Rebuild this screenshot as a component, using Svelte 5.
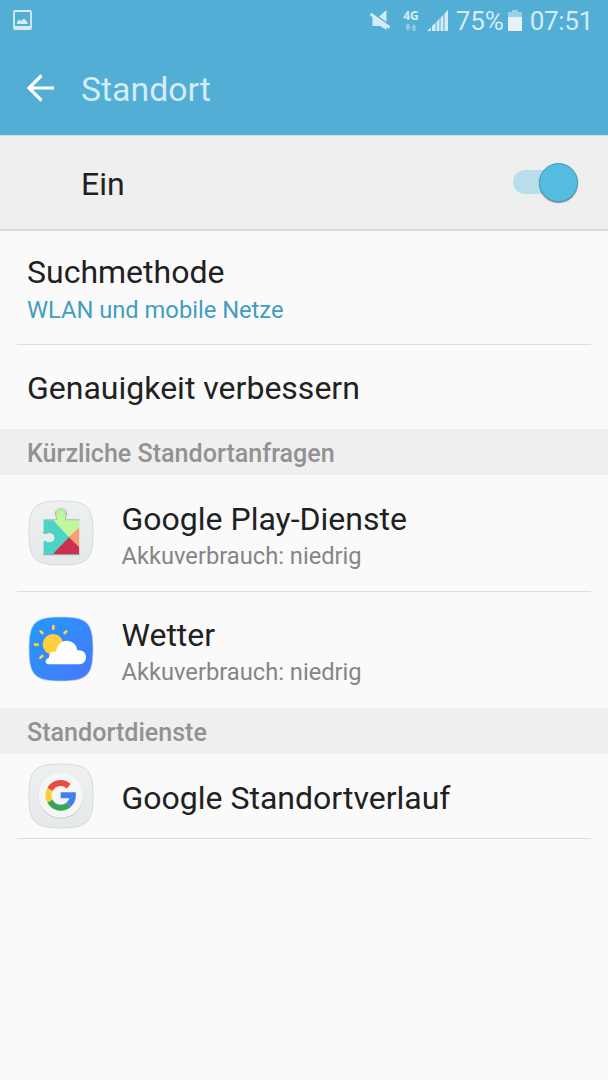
<script lang="ts">
	type App = { name: string; icon: 'play' | 'weather' | 'google'; note?: string };

	const requests: App[] = [
		{ name: 'Google Play-Dienste', icon: 'play', note: 'Akkuverbrauch: niedrig' },
		{ name: 'Wetter', icon: 'weather', note: 'Akkuverbrauch: niedrig' }
	];

	const services: App[] = [{ name: 'Google Standortverlauf', icon: 'google' }];

	// rounded launcher tile, shared by all app icons
	const TILE = 'M99 3C178 3 195 20 195 99S178 195 99 195 3 178 3 99 20 3 99 3Z';

	let enabled = $state(true);
</script>

{#snippet appIcon(kind: App['icon'])}
	<svg class="app-icon" viewBox="0 0 198 198">
		<defs>
			<linearGradient id="tile-grey" x1="0" y1="0" x2="0" y2="1">
				<stop offset="0" stop-color="#eef0f0" />
				<stop offset="1" stop-color="#e5e9ea" />
			</linearGradient>
			<linearGradient id="tile-blue" x1="0" y1="0" x2="1" y2="1">
				<stop offset="0" stop-color="#2499ff" />
				<stop offset="1" stop-color="#4877fa" />
			</linearGradient>
			<clipPath id="puzzle">
				<path
					d="M46 61H81C86 61 89 58 87 54C82 49 84 43 84 38C84 28 93 25 99 25S114 29 114 38C114 44 116 49 111 54C109 58 112 61 117 61H154V163H46V129C46 123 50 121 54 124C58 128 64 126 67 126C76 126 80 119 80 112S75 98 67 98C62 98 58 97 54 101C50 103 46 101 46 96Z"
				/>
			</clipPath>
		</defs>
		{#if kind === 'weather'}
			<path d={TILE} fill="url(#tile-blue)" stroke="#c3d3df" stroke-width="2" />
			<g stroke="#ffd43c" stroke-width="8" stroke-linecap="round">
				<path d="M76 30V38M38 46L43 51M115 46L110 51M21 86H29M37 125L43 120" />
			</g>
			<circle cx="75" cy="85" r="31" fill="#fed03c" />
			<path
				d="M63 145C50 145 50 127 63 126C62 113 73 104 84 107C88 87 99 74 116 74C133 74 146 86 148 103C164 100 174 111 174 123C174 136 165 145 153 145Z"
				fill="#fff"
			/>
		{:else}
			<path d={TILE} fill="url(#tile-grey)" stroke="#d8dbdb" stroke-width="3" />
		{/if}
		{#if kind === 'play'}
			<path
				d="M46 60H82C89 58 84 53 83 38C84 22 114 22 115 38C114 53 109 58 116 60H154M46 96C48 105 58 96 67 98C76 98 80 104 80 112M46 164H155"
				fill="none"
				stroke="#8f9c98"
				stroke-width="3"
			/>
			<g clip-path="url(#puzzle)">
				<path d="M40 20H160V175H40Z" fill="#4dd3c5" />
				<path d="M75 64V20H160V80L123 112L75 61Z" fill="#c3f59f" />
				<path d="M155 80V145L123 112Z" fill="#fd9d76" />
				<path d="M72 165L123 112L155 143V165Z" fill="#cd2f4c" />
				<path d="M84 48Q87 31 99 31T114 48" fill="none" stroke="#a8dc87" stroke-width="3" />
			</g>
		{:else if kind === 'google'}
			<circle cx="98" cy="100" r="67" fill="#c8cdd0" />
			<circle cx="98" cy="97" r="67" fill="#f6f6f6" />
			<g fill="none" stroke-width="18">
				<path d="M65.8 79.5A36.5 36.5 0 0 1 122 69.5" stroke="#ea4c40" />
				<path d="M65.8 114.5A36.5 36.5 0 0 1 65.8 79.5" stroke="#fccf3a" />
				<path d="M122 125A36.5 36.5 0 0 1 65.8 114.5" stroke="#38a657" />
				<path d="M98 97H134.5A36.5 36.5 0 0 1 122 125" stroke="#437ef0" />
			</g>
		{/if}
	</svg>
{/snippet}

{#snippet appRow(app: App)}
	<div class="row app-row {app.icon}" class:single={!app.note}>
		{@render appIcon(app.icon)}
		<div class="texts">
			<div class="name">{app.name}</div>
			{#if app.note}
				<div class="note">{app.note}</div>
			{/if}
		</div>
	</div>
{/snippet}

<div class="screen">
	<header>
		<div class="status">
			<svg class="picture" width="20" height="21" viewBox="0 0 20 21">
				<rect x="1" y="1" width="17" height="18" rx="1" fill="none" stroke="#d4ecf6" stroke-width="1.8" />
				<path d="M1 17.5H18" stroke="#d4ecf6" stroke-width="3" />
				<path d="M4 14V12L6 9.5L8 11L11 8.5L14.5 12V14Z" fill="#d4ecf6" />
			</svg>
			<svg class="mute" width="21" height="22" viewBox="0 0 21 22">
				<path d="M9 6.5L16.5 0V12ZM2.5 7H6L16.5 15V20L10 16H2.5Z" fill="#d4ecf6" />
				<path d="M0.5 4L19.5 17.5" stroke="#d4ecf6" stroke-width="2.8" />
			</svg>
			<div class="network">
				<span>4G</span>
				<svg width="12" height="7" viewBox="0 0 12 7">
					<path d="M1.5 0H4.5V3H6L3 7L0 3H1.5ZM7.5 7H10.5V4H12L9 0L6 4H7.5Z" fill="#91cbe3" />
				</svg>
			</div>
			<svg class="signal" width="21" height="21" viewBox="0 0 21 21">
				<path
					d="M0 21L4 17.5V21ZM5 16L8.5 12.5V21H5ZM9.5 12L12.5 8.5V21H9.5ZM13.5 8L16.5 4.5V21H13.5ZM17.5 3.5L21 0V21H17.5Z"
					fill="#d4ecf6"
				/>
			</svg>
			<span class="percent">75%</span>
			<svg class="battery" width="14" height="21" viewBox="0 0 14 21">
				<path d="M4 0H10V2H14V7H0V2H4Z" fill="#9bd0e6" />
				<path d="M0 7H14V21H0Z" fill="#e9f1f5" />
			</svg>
			<span class="clock">07:51</span>
		</div>
		<div class="toolbar">
			<svg width="28" height="28" viewBox="0 0 28 28">
				<path d="M27 14H2M14.5 1.5L2 14L14.5 26.5" fill="none" stroke="#fff" stroke-width="3.2" />
			</svg>
			<h1>Standort</h1>
		</div>
	</header>

	<div class="switch-bar">
		<span>{enabled ? 'Ein' : 'Aus'}</span>
		<button
			class="switch"
			class:on={enabled}
			role="switch"
			aria-checked={enabled}
			aria-label="Standort"
			onclick={() => (enabled = !enabled)}
		>
			<span class="knob"></span>
		</button>
	</div>

	<div class="row method">
		<div class="texts">
			<div class="name">Suchmethode</div>
			<div class="note accent">WLAN und mobile Netze</div>
		</div>
	</div>
	<div class="divider"></div>
	<div class="row improve">
		<div class="name">Genauigkeit verbessern</div>
	</div>

	<h2>Kürzliche Standortanfragen</h2>
	{#each requests as app, i (app.name)}
		{#if i > 0}
			<div class="divider"></div>
		{/if}
		{@render appRow(app)}
	{/each}

	<h2>Standortdienste</h2>
	{#each services as app (app.name)}
		{@render appRow(app)}
		<div class="divider"></div>
	{/each}
</div>

<style>
	:global(body) {
		margin: 0;
		background: #fafafa;
	}

	.screen {
		min-height: 1080px;
		background: #fafafa;
		color: #212121;
		font-family: Roboto, sans-serif;
	}

	header {
		height: 135px;
		background: #52aed5;
		color: #d4ecf6;
	}

	.status {
		display: flex;
		align-items: center;
		height: 41px;
		padding: 0 15px 0 13px;
		font-size: 26px;
	}

	.mute {
		margin: 0 12px 0 auto;
	}

	.network {
		display: flex;
		flex-direction: column;
		align-items: center;
		gap: 2px;
		margin-right: 8px;
		font: 700 12px/12px 'Open Sans', sans-serif;
	}

	.percent {
		margin: 0 4px 0 8px;
		letter-spacing: -0.1px;
	}

	.clock {
		margin: 0 0 0 8px;
		letter-spacing: -0.3px;
	}

	.toolbar {
		display: flex;
		align-items: center;
		height: 94px;
		padding-left: 27px;
	}

	h1 {
		margin: 3px 0 0 26px;
		font-size: 33.8px;
		font-weight: 400;
		line-height: 40px;
	}

	.switch-bar {
		display: flex;
		align-items: center;
		justify-content: space-between;
		box-sizing: border-box;
		height: 96px;
		padding: 0 30px 0 81px;
		border-top: 1px solid #d5dadc;
		border-bottom: 2px solid #d9dbda;
		background: #efefef;
		font-size: 32px;
	}

	.switch-bar > span {
		padding-top: 2px;
	}

	.switch {
		display: flex;
		align-items: center;
		width: 65px;
		height: 24px;
		margin-bottom: 1px;
		padding: 0;
		border: 0;
		border-radius: 12px;
		background: #d0d0d0;
	}

	.switch.on {
		justify-content: flex-end;
		background: #b8deeb;
	}

	.knob {
		box-sizing: border-box;
		width: 39px;
		height: 39px;
		flex-shrink: 0;
		border: 1px solid #459fc1;
		border-radius: 50%;
		background: #54bbe1;
		box-shadow: 0 1px 1px rgba(0, 0, 0, 0.45);
	}

	.row {
		display: flex;
		align-items: center;
		box-sizing: border-box;
		padding: 0 27px;
	}

	.method {
		height: 113px;
	}

	.method .note {
		line-height: 34px;
		margin-bottom: -2px;
	}

	.improve {
		height: 84px;
		padding-top: 2px;
	}

	.app-row {
		height: 116px;
		padding-left: 27.5px;
	}

	.app-row.single {
		height: 84px;
	}

	.app-row .texts {
		padding-top: 4px;
	}

	.weather {
		padding-bottom: 3px;
	}

	.app-icon {
		width: 66px;
		height: 66px;
		margin-right: 28px;
		flex-shrink: 0;
	}

	.name {
		font-size: 32px;
		line-height: 42px;
	}

	.note {
		color: #858585;
		font-size: 23.7px;
		line-height: 32px;
	}

	.note.accent {
		color: #419ec1;
	}

	.divider {
		height: 1px;
		margin: 0 17px;
		background: #dcdcdc;
	}

	h2 {
		height: 46px;
		margin: 0;
		padding-left: 27px;
		background: #efefef;
		color: #929292;
		font-size: 25.1px;
		font-weight: 500;
		line-height: 49px;
	}
</style>
